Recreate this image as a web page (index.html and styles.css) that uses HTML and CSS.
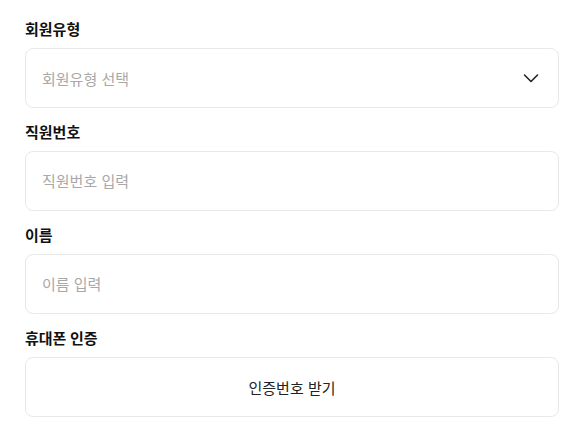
FILE: index.html
```html
<!DOCTYPE html>
<html lang="ko">
<head>
    <meta charset="UTF-8">
    <meta name="viewport" content="width=device-width, initial-scale=1.0">
    <title>회원가입</title>
    <link rel="stylesheet" href="styles.css">
</head>
<body>
    <form class="signup">
        <div class="field">
            <label for="memberType">회원유형</label>
            <div class="select-box" id="memberType">
                <span class="placeholder">회원유형 선택</span>
                <svg class="chevron" width="16" height="16" viewBox="0 0 16 16">
                    <polyline points="1.5,5 8,11.5 14.5,5" fill="none" stroke="#222" stroke-width="1.6" stroke-linecap="round" stroke-linejoin="round"/>
                </svg>
            </div>
        </div>

        <div class="field">
            <label for="empNo">직원번호</label>
            <input type="text" id="empNo" placeholder="직원번호 입력">
        </div>

        <div class="field">
            <label for="name">이름</label>
            <input type="text" id="name" placeholder="이름 입력">
        </div>

        <div class="field">
            <label>휴대폰 인증</label>
            <button type="button" class="verify-btn">인증번호 받기</button>
        </div>
    </form>
</body>
</html>
```

FILE: styles.css
```css
body {
    margin: 0;
    padding: 0;
    background-color: #ffffff;
    font-family: Inter, "Noto Sans CJK KR", sans-serif;
    color: #111;
}
.signup {
    width: 534px;
    margin-left: 25px;
    padding-top: 20px;
    display: flex;
    flex-direction: column;
    gap: 15px;
}
.field {
    display: flex;
    flex-direction: column;
}
label {
    font-size: 15px;
    font-weight: 700;
    line-height: 20px;
    margin-bottom: 8px;
    color: #111;
}
input, .select-box, .verify-btn {
    box-sizing: border-box;
    width: 100%;
    height: 60px;
    border: 1px solid #e8e8e8;
    border-radius: 8px;
    background-color: #fff;
    font-family: inherit;
    font-size: 15px;
    margin: 0;
}
input {
    padding: 0 16px;
    color: #111;
}
input::placeholder, .placeholder {
    color: #a8a8a8;
}
input:focus {
    outline: none;
    border-color: #bbb;
}
.select-box {
    display: flex;
    align-items: center;
    justify-content: space-between;
    padding: 0 19px 0 16px;
    cursor: pointer;
}
.verify-btn {
    color: #222;
    font-weight: 400;
    cursor: pointer;
}
```
